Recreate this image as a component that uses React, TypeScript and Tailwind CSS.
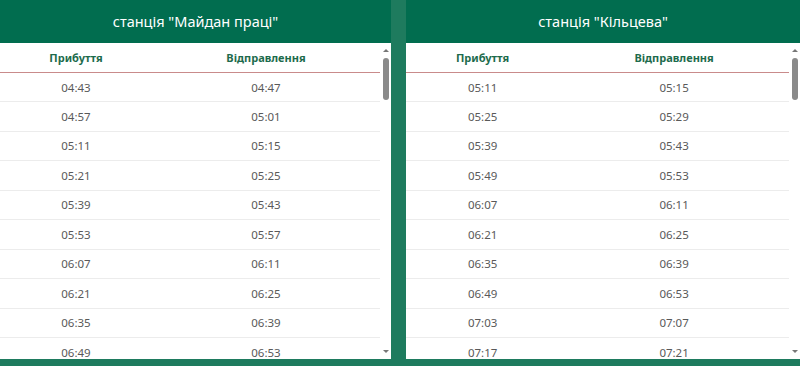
import React from "react";

const left = [
  ["04:43", "04:47"],
  ["04:57", "05:01"],
  ["05:11", "05:15"],
  ["05:21", "05:25"],
  ["05:39", "05:43"],
  ["05:53", "05:57"],
  ["06:07", "06:11"],
  ["06:21", "06:25"],
  ["06:35", "06:39"],
  ["06:49", "06:53"],
];

const right = [
  ["05:11", "05:15"],
  ["05:25", "05:29"],
  ["05:39", "05:43"],
  ["05:49", "05:53"],
  ["06:07", "06:11"],
  ["06:21", "06:25"],
  ["06:35", "06:39"],
  ["06:49", "06:53"],
  ["07:03", "07:07"],
  ["07:17", "07:21"],
];

const Scrollbar = () => (
  <div className="w-[11px] shrink-0 flex flex-col items-center pt-[6px] pb-[6px]">
    <div className="w-0 h-0 border-l-[3px] border-r-[3px] border-b-[3px] border-l-transparent border-r-transparent border-b-[#777]" />
    <div className="w-[6px] h-[42px] mt-[6px] rounded-full bg-[#8a8a8a]" />
    <div className="flex-1" />
    <div className="w-0 h-0 border-l-[3px] border-r-[3px] border-t-[3px] border-l-transparent border-r-transparent border-t-[#777]" />
  </div>
);

const Panel = ({ title, rows, width }: { title: string; rows: string[][]; width: string }) => (
  <div className={`${width} h-[359px] bg-white flex flex-col shrink-0`}>
    <div className="h-[43px] bg-[#016d4f] flex items-center justify-center text-white text-[14.5px]">
      {title}
    </div>
    <div className="flex flex-1 min-h-0">
      <div className="flex-1 overflow-hidden">
        <div className="h-[30px] pt-[1px] flex items-center border-b-[1.5px] border-[#c98b8b] text-[11px] font-bold text-[#1d6b4c]">
          <div className="w-[40%] text-center">Прибуття</div>
          <div className="w-[60%] text-center">Відправлення</div>
        </div>
        {rows.map((r, i) => (
          <div key={i} className="h-[29.45px] flex items-center border-b border-[#ececec] text-[11.5px] text-[#595959]">
            <div className="w-[40%] text-center">{r[0]}</div>
            <div className="w-[60%] text-center">{r[1]}</div>
          </div>
        ))}
      </div>
      <Scrollbar />
    </div>
  </div>
);

export default function App() {
  return (
    <div
      className="w-[800px] h-[366px] bg-[#1e7b5e] flex gap-[15px] overflow-hidden"
      style={{ fontFamily: '"Noto Sans", "Open Sans", sans-serif' }}
    >
      <Panel title={'станція "Майдан праці"'} rows={left} width="w-[391px]" />
      <Panel title={'станція "Кільцева"'} rows={right} width="w-[394px]" />
    </div>
  );
}
